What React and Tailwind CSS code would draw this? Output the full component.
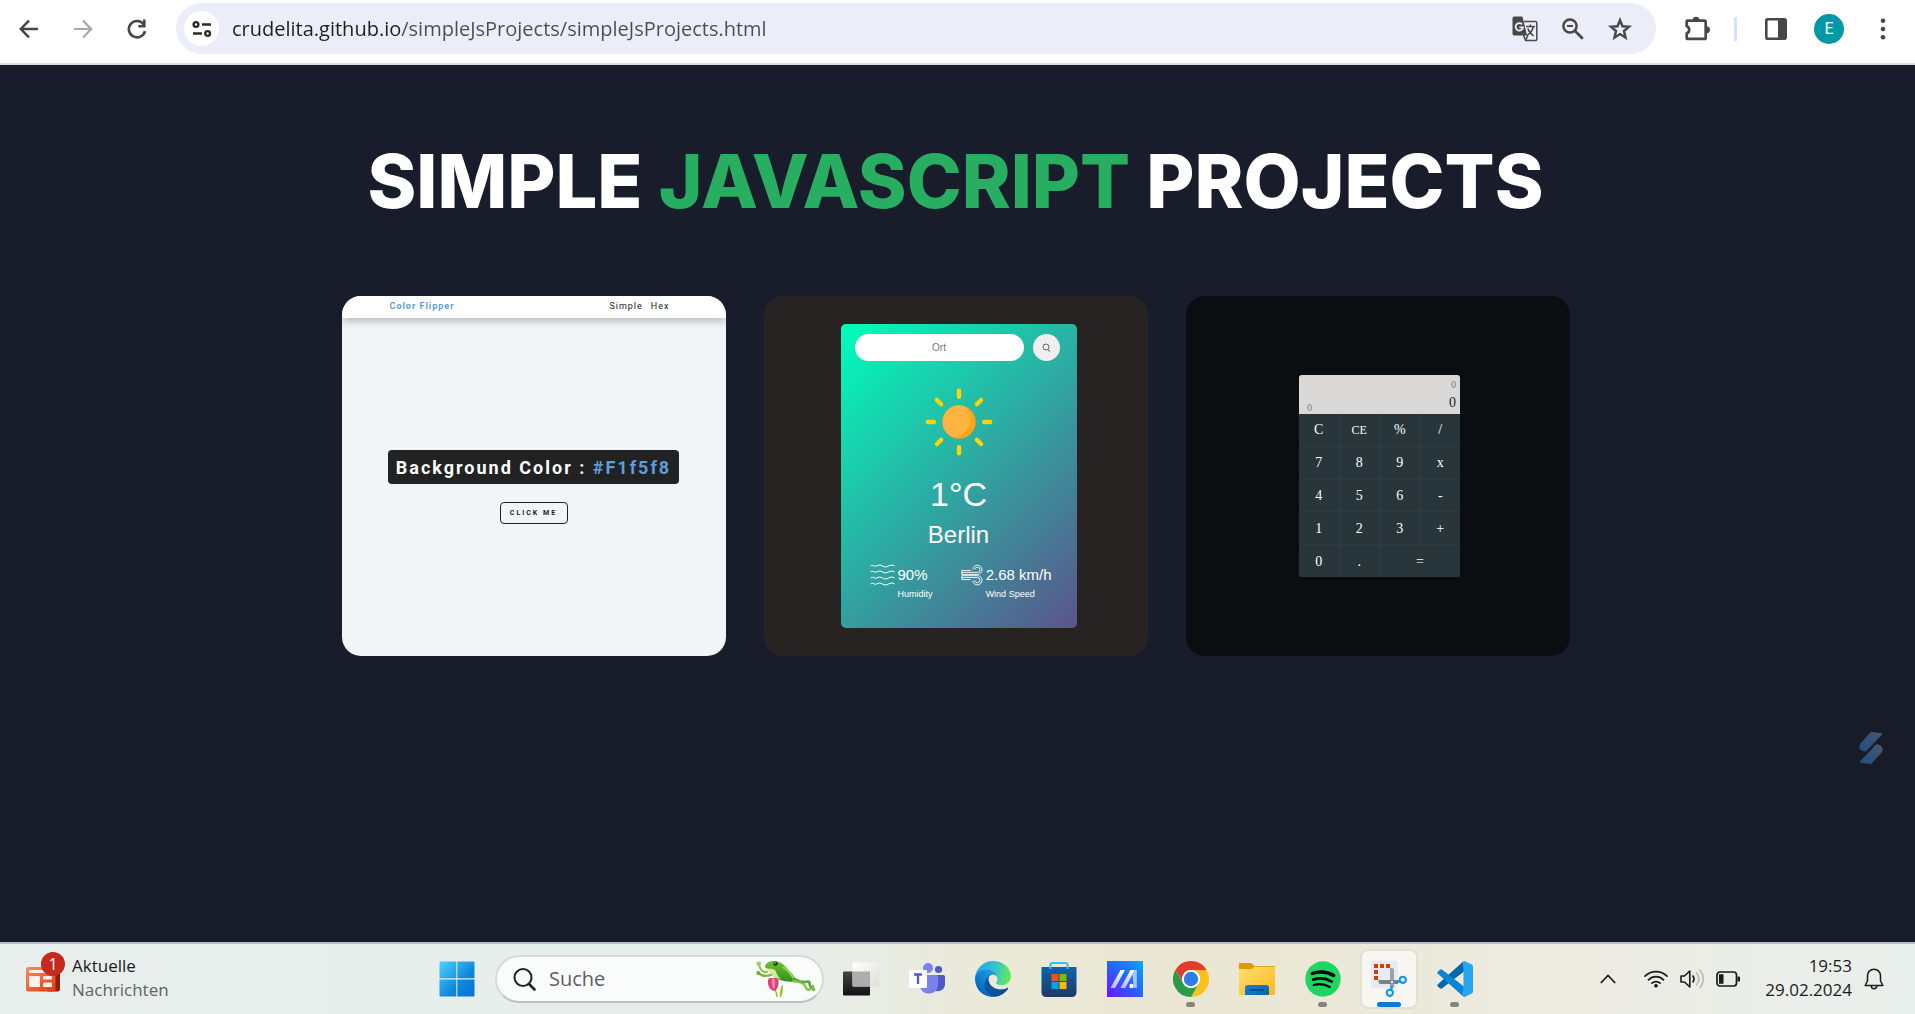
import React from "react";

const UI = "font-['Open_Sans','Noto_Sans',sans-serif]";

/* ---------- browser toolbar icons ---------- */

function ArrowLeft() {
  return (
    <svg viewBox="0 0 20 20" className="size-5" fill="none" stroke="currentColor" strokeWidth="2.5">
      <path d="M19 10H3M10 1.6L1.8 10l8.2 8.4" />
    </svg>
  );
}

function ArrowRight() {
  return (
    <svg viewBox="0 0 20 20" className="size-5" fill="none" stroke="currentColor" strokeWidth="2.2">
      <path d="M1 10h16M10 1.6L18.2 10 10 18.4" />
    </svg>
  );
}

function Reload() {
  return (
    <svg viewBox="0 0 20 20" className="size-5" fill="none" stroke="currentColor" strokeWidth="2.6">
      <path d="M18 12.2A8.2 8.2 0 1 1 16.6 5.2" />
      <path d="M18.6 .6V8.6H11.4V6h4.6V.6z" fill="currentColor" stroke="none" />
    </svg>
  );
}

function SiteSettings() {
  return (
    <svg viewBox="0 0 20 20" className="size-5" fill="none" stroke="currentColor" strokeWidth="2.4">
      <circle cx="4" cy="5.5" r="2.4" />
      <path d="M10 5.5h9M1 14.5h9" />
      <circle cx="15.6" cy="14.5" r="2.4" />
    </svg>
  );
}

function Translate() {
  return (
    <svg viewBox="0 0 26 26" className="size-[26px]">
      <path d="M12 5.6h11.4a1.4 1.4 0 0 1 1.4 1.4v16.2a1.4 1.4 0 0 1-1.4 1.4H13.6L11.5 19" fill="none" stroke="#474747" strokeWidth="1.5" />
      <path d="M2.2.5h8.2l4.7 18.9H2.2A1.7 1.7 0 0 1 .5 17.7V2.2A1.7 1.7 0 0 1 2.2.5z" fill="#474747" />
      <path d="M10 8.3a3.7 3.7 0 1 0 1 3H7.4" fill="none" stroke="#ebeef8" strokeWidth="1.8" />
      <path d="M14 10.5h9M18.3 8.5v2M21.3 10.5c-.8 4-3.3 7-6.3 9M15.8 12.5c1 3 3 5.500 6 7.500M13.600 24.500l2.200-5" fill="none" stroke="#474747" strokeWidth="1.5" />
    </svg>
  );
}

function ZoomOut() {
  return (
    <svg viewBox="0 0 22 22" className="size-[22px]" fill="none" stroke="currentColor">
      <circle cx="8" cy="8" r="6.6" strokeWidth="2.5" />
      <path d="M12.8 12.8l8 8" strokeWidth="2.7" />
      <path d="M5 8h6" strokeWidth="2" />
    </svg>
  );
}

function Star() {
  return (
    <svg viewBox="0 0 24 24" className="size-6" fill="none" stroke="currentColor" strokeWidth="2.4">
      <path d="M12 3.200l2.500 6.100 6.500.5-5 4.200 1.600 6.600L12 17.100l-5.600 3.500L8 14 3 9.800l6.500-.5z" />
    </svg>
  );
}

function Puzzle() {
  return (
    <svg viewBox="0 0 25 25" className="size-[25px]">
      <path d="M2.300 4.700H19.500a1.200 1.200 0 0 1 1.200 1.200V21.700a1.200 1.200 0 0 1-1.200 1.200H2.300a.6.6 0 0 1-.6-.6V17.400a4 4 0 0 0 0-7.400V5.300a.6.6 0 0 1 .6-.6z" fill="none" stroke="currentColor" strokeWidth="2.7" />
      <path d="M7.800 4a3.300 3.300 0 0 1 6.600 0zM21.500 10.300a3.500 3.500 0 0 1 0 7z" fill="currentColor" />
    </svg>
  );
}

function SidePanel() {
  return (
    <svg viewBox="0 0 22 22" className="size-[22px]">
      <rect x="1.3" y="1.3" width="19.4" height="19.4" rx="1.5" fill="none" stroke="currentColor" strokeWidth="2.6" />
      <path d="M13 1h7v20h-7z" fill="currentColor" />
    </svg>
  );
}

function Dots() {
  return (
    <svg viewBox="0 0 6 22" className="h-[22px] w-1.5" fill="currentColor">
      <circle cx="3" cy="2.7" r="2.3" />
      <circle cx="3" cy="11" r="2.3" />
      <circle cx="3" cy="19.3" r="2.3" />
    </svg>
  );
}

/* ---------- taskbar icons ---------- */

function NewsIcon() {
  return (
    <svg viewBox="0 0 34 26" className="h-[26px] w-[34px]">
      <defs>
        <linearGradient id="news" x1="0" y1="0" x2="1" y2="1">
          <stop offset="0" stopColor="#ff8a5c" />
          <stop offset="1" stopColor="#df3a14" />
        </linearGradient>
      </defs>
      <rect x="20" y="3" width="14" height="22.5" rx="2.5" fill="#8f1d0c" />
      <rect x="0" y="1" width="29.5" height="24.5" rx="2.5" fill="url(#news)" />
      <rect x="3" y="4" width="24" height="3" rx="1" fill="#fff1ea" />
      <rect x="3" y="10" width="11" height="11" rx="1" fill="#fff1ea" />
      <rect x="17" y="10" width="9" height="3.5" rx="1" fill="#fff1ea" />
      <rect x="17" y="16.5" width="9" height="4.5" rx="1" fill="#fff1ea" />
    </svg>
  );
}

function WindowsLogo() {
  return (
    <svg viewBox="0 0 36 36" className="size-9">
      <defs>
        <linearGradient id="win" gradientUnits="userSpaceOnUse" x1="0" y1="0" x2="36" y2="36">
          <stop offset="0" stopColor="#4fd4ff" />
          <stop offset=".6" stopColor="#0f86dc" />
          <stop offset="1" stopColor="#0074d4" />
        </linearGradient>
      </defs>
      <path d="M1.500.5H17.300V17.200H.5V1.500a1 1 0 0 1 1-1zM18.300.5H34.500a1 1 0 0 1 1 1V17.200H18.300zM.5 18.600H17.300V35.500H1.500a1 1 0 0 1-1-1zM18.300 18.600H35.500V34.500a1 1 0 0 1-1 1H18.300z" fill="url(#win)" />
    </svg>
  );
}

function Frog() {
  return (
    <svg viewBox="0 0 60 38" className="h-[38px] w-[60px]">
      <defs>
        <linearGradient id="frog" x1="0" y1="0" x2="0" y2="1">
          <stop offset="0" stopColor="#6cc62c" />
          <stop offset="1" stopColor="#2f8f22" />
        </linearGradient>
      </defs>
      <path d="M24 37c-.5-5 .5-9 2.500-13 .8 5 0 9-1.500 13z" fill="#8fbf20" />
      <path d="M19 30c1.500 2 2 4 2 7" fill="none" stroke="#a5b93a" strokeWidth="1.5" />
      <path d="M12 20c1-2.500 3-2 5.500-2s4 0 4.800 1.500c.8 5-.3 9.500-3.800 11.500-5-1-7-6-6.500-11z" fill="#e23f74" />
      <path d="M15.500 19.500c1-1 2.500-1 3.500 0 .3 4 0 7-.8 10-1.800-2-2.700-6-2.700-10z" fill="#f68aa9" />
      <path d="M11 12C7 12.500 4 9.500 3 5" fill="none" stroke="#8cc84a" strokeWidth="2.2" strokeLinecap="round" />
      <circle cx="2.7" cy="3.8" r="2.3" fill="#a9c77a" />
      <path d="M17 14C12 16.500 7 16.500 3 13.500" fill="none" stroke="#79b83a" strokeWidth="2.4" strokeLinecap="round" />
      <circle cx="2.3" cy="13" r="2" fill="#6da845" />
      <path d="M9 5.500C11.500 1.500 16 .3 21 1.500c5 1 8 4 11 8 4 4 6.500 7 8.500 11-3 2-11 1.500-17.500-1-5-2-8-5-9-9-3-1-5-2.500-5-5z" fill="url(#frog)" />
      <path d="M10 8c3 1 6 0 9 2 2 3 2 6 6 9-6-1-10-4-11-8-2 0-4-1-4-3z" fill="#dde5a4" />
      <path d="M27 7c5 3 8 7 11 12" fill="none" stroke="#98dc4c" strokeWidth="2" />
      <path d="M38 19c5 2.500 8 3.500 11 3 3-.8 4.500-1 4.500 1 0 2.500 1 4.500 4.500 6.500" fill="none" stroke="#53a830" strokeWidth="2.6" strokeLinecap="round" />
      <path d="M37 21c5 .5 10 1 11.500 4l2.500 4.500M51 29.500h3M57 26v4" fill="none" stroke="#7fc045" strokeWidth="2.3" strokeLinecap="round" />
      <circle cx="19.5" cy="3.6" r="2.2" fill="#20301a" />
      <circle cx="19" cy="3" r=".7" fill="#fff" />
    </svg>
  );
}

function TaskViewIcon() {
  return (
    <svg viewBox="0 0 36 36" className="size-9">
      <defs>
        <linearGradient id="tvd" x1="0" y1="0" x2="0" y2="1">
          <stop offset="0" stopColor="#444" />
          <stop offset="1" stopColor="#111" />
        </linearGradient>
        <linearGradient id="tvl" x1="0" y1="0" x2="1" y2="1">
          <stop offset="0" stopColor="#fff" />
          <stop offset="1" stopColor="#dedede" />
        </linearGradient>
      </defs>
      <rect x="0" y="10.5" width="27" height="24" rx="1" fill="url(#tvd)" />
      <rect x="9.5" y="1.5" width="26" height="24" rx="1" fill="url(#tvl)" />
      <path d="M9.500 10.500H27v15H9.500z" fill="#adadad" />
    </svg>
  );
}

function TeamsIcon() {
  return (
    <svg viewBox="0 0 36 36" className="size-9">
      <circle cx="29.5" cy="8.5" r="3.6" fill="#5059c9" />
      <path d="M22 14H34.500A1.500 1.500 0 0 1 36 15.500V23a7 7 0 0 1-12 5z" fill="#5059c9" />
      <circle cx="19" cy="7" r="5" fill="#7b83eb" />
      <path d="M11 14H27.500A1.500 1.500 0 0 1 29 15.500V25.500a9.500 9.500 0 0 1-18 1z" fill="#7b83eb" />
      <rect x="0" y="9" width="18" height="18" rx="1" fill="#fff" />
      <path d="M5 13.500h8M9 13.500v9.500" stroke="#5059c9" strokeWidth="2.3" />
    </svg>
  );
}

function EdgeIcon() {
  return (
    <svg viewBox="0 0 256 256" className="size-9">
      <defs>
        <linearGradient id="e1" gradientUnits="userSpaceOnUse" x1="60" y1="177" x2="240" y2="177">
          <stop offset="0" stopColor="#0c59a4" />
          <stop offset="1" stopColor="#114a8b" />
        </linearGradient>
        <linearGradient id="e2" gradientUnits="userSpaceOnUse" x1="155" y1="100" x2="46" y2="220">
          <stop offset="0" stopColor="#1b9de2" />
          <stop offset=".6" stopColor="#0f7fd3" />
          <stop offset="1" stopColor="#0067b8" />
        </linearGradient>
        <linearGradient id="e3" gradientUnits="userSpaceOnUse" x1="20" y1="60" x2="250" y2="110">
          <stop offset="0" stopColor="#2aa9e8" />
          <stop offset=".5" stopColor="#35c1d4" />
          <stop offset="1" stopColor="#66eb4c" />
        </linearGradient>
      </defs>
      <path fill="url(#e1)" d="M231 190.500c-3.400 1.800-6.900 3.400-10.500 4.700a101.700 101.700 0 0 1-35.900 6.500c-47.300 0-88.500-32.500-88.500-74.300a31.500 31.500 0 0 1 16.400-27.300c-42.800 1.800-53.800 46.400-53.800 72.500 0 73.900 68.100 81.400 82.800 81.400 7.900 0 19.800-2.300 27-4.600l1.300-.4a128.300 128.300 0 0 0 66.600-52.800 4 4 0 0 0-5.400-5.700z" />
      <path fill="url(#e2)" d="M105.700 241.400a79.200 79.200 0 0 1-22.700-21.300 80.700 80.700 0 0 1 29.500-120c3.200-1.500 8.500-4.100 15.600-4a32.400 32.400 0 0 1 25.700 13 31.900 31.900 0 0 1 6.300 18.700c0-.2 24.500-79.600-80-79.600-43.900 0-80 41.600-80 78.200a130.200 130.200 0 0 0 12.100 56 128 128 0 0 0 156.400 67 75.500 75.500 0 0 1-62.800-8z" />
      <path fill="url(#e3)" d="M152.300 148.900c-.9 1-3.400 2.500-3.400 5.600 0 2.600 1.700 5.200 4.800 7.300 14.300 10 41.400 8.600 41.500 8.600a59.600 59.600 0 0 0 30.300-8.300 61.400 61.400 0 0 0 30.400-52.900c.3-22.400-8-37.300-11.300-43.900C223.500 23.900 177.700 0 128 0A128 128 0 0 0 0 126.200c.5-36.500 36.800-66 80-66 3.500 0 23.500.3 42 10.100 16.300 8.600 24.900 19 30.800 29.200 6.200 10.700 7.300 24.100 7.300 29.500s-2.700 13.300-7.800 19.900z" />
    </svg>
  );
}

function StoreIcon() {
  return (
    <svg viewBox="0 0 36 36" className="size-9">
      <defs>
        <linearGradient id="store" x1="0" y1="0" x2="0" y2="1">
          <stop offset="0" stopColor="#0f63ae" />
          <stop offset="1" stopColor="#1d3a63" />
        </linearGradient>
      </defs>
      <path d="M.5 6H35.500V31.500a4.500 4.500 0 0 1-4.500 4.500H5a4.500 4.500 0 0 1-4.500-4.500z" fill="url(#store)" />
      <path d="M9.500 8V3.500a1.500 1.500 0 0 1 1.500-1.500H25a1.500 1.500 0 0 1 1.500 1.500V8" fill="none" stroke="#2fc3f5" strokeWidth="2" />
      <path d="M10.500 13h7v7h-7z" fill="#f25022" />
      <path d="M18.500 13h7v7h-7z" fill="#7fba00" />
      <path d="M10.500 21h7v7h-7z" fill="#00a4ef" />
      <path d="M18.500 21h7v7h-7z" fill="#ffb900" />
    </svg>
  );
}

function MyAsusIcon() {
  return (
    <svg viewBox="0 0 36 36" className="size-9">
      <defs>
        <linearGradient id="asus" x1="0" y1="1" x2="1" y2="0">
          <stop offset="0" stopColor="#6d12ff" />
          <stop offset=".5" stopColor="#2763ff" />
          <stop offset="1" stopColor="#05a8ff" />
        </linearGradient>
        <linearGradient id="asusm" x1="0" y1="0" x2="0" y2="1">
          <stop offset="0" stopColor="#ffffff" />
          <stop offset="1" stopColor="#b9b4ff" />
        </linearGradient>
      </defs>
      <path d="M0 0h36v36H0z" fill="url(#asus)" />
      <path d="M3.500 27L13.500 9h4.500L8.200 27zM13.500 27L23.500 9h4.500L18.200 27z" fill="url(#asusm)" />
      <path d="M25.500 13.500L28 9h1.800V27h-3z" fill="#a9c4ff" />
      <circle cx="24.5" cy="25" r="2.2" fill="#fff" />
    </svg>
  );
}

function ChromeIcon() {
  const wedge = "M2.400 9A18 18 0 0 1 33.600 9H18A9 9 0 0 0 10.200 22.500z";
  return (
    <svg viewBox="0 0 36 36" className="size-9">
      <path d={wedge} fill="#e33b2e" />
      <path d={wedge} fill="#fbc116" transform="rotate(120 18 18)" />
      <path d={wedge} fill="#2a9c49" transform="rotate(240 18 18)" />
      <circle cx="18" cy="18" r="9" fill="#fff" />
      <circle cx="18" cy="18" r="7.2" fill="#2f7bea" />
    </svg>
  );
}

function FolderIcon() {
  return (
    <svg viewBox="0 0 36 36" className="size-9">
      <defs>
        <linearGradient id="fold" x1="0" y1="0" x2="1" y2="1">
          <stop offset="0" stopColor="#ffde70" />
          <stop offset="1" stopColor="#fbb91c" />
        </linearGradient>
        <linearGradient id="foldb" x1="0" y1="0" x2="1" y2="1">
          <stop offset="0" stopColor="#0f83d6" />
          <stop offset="1" stopColor="#1160ad" />
        </linearGradient>
      </defs>
      <path d="M0 3a1 1 0 0 1 1-1H11.500a2 2 0 0 1 1.500.7L15.300 5H35a1 1 0 0 1 1 1v6H0z" fill="#dd9a05" />
      <path d="M0 8H12.500l3-2.200H36V33a1 1 0 0 1-1 1H1a1 1 0 0 1-1-1z" fill="url(#fold)" />
      <path d="M6 34V27a3 3 0 0 1 3-3H27a3 3 0 0 1 3 3v7z" fill="url(#foldb)" />
      <path d="M10.500 29H25" stroke="#0b4f91" strokeWidth="2" />
    </svg>
  );
}

function SpotifyIcon() {
  return (
    <svg viewBox="0 0 36 36" className="size-9">
      <circle cx="18" cy="18" r="17.7" fill="#1ed760" />
      <g fill="none" stroke="#000" strokeLinecap="round">
        <path d="M7.200 12.500c7-2.200 15.500-1.500 21.500 1.900" strokeWidth="3.4" />
        <path d="M8.200 18.600c6-1.800 13.500-1 18.500 2" strokeWidth="2.8" />
        <path d="M8.900 24c5.500-1.400 11-.9 15.800 1.900" strokeWidth="2.3" />
      </g>
    </svg>
  );
}

function SnipIcon() {
  return (
    <svg viewBox="0 0 36 36" className="size-9">
      <rect x="0" y="0" width="27" height="27" rx="2" fill="#e6eaf1" />
      <path d="M3 3h4v4H3zM9 3h4v4H9zM15 3h4v4h-4zM3 9h4v4H3zM3 15h4v4H3z" fill="#d83b01" />
      <path d="M19 7h2a2 2 0 0 1 2 2v17h-4z" fill="#9aa1ab" />
      <path d="M7.500 19H27v4H9a2 2 0 0 1-1.500-2z" fill="#7a828e" />
      <circle cx="21" cy="21" r="1.3" fill="#dfe3e8" />
      <circle cx="31.8" cy="18.8" r="3.1" fill="none" stroke="#1296e0" strokeWidth="2.1" />
      <circle cx="18.8" cy="31.8" r="3.1" fill="none" stroke="#1296e0" strokeWidth="2.1" />
      <path d="M25.500 21l3.500-.8M21 25l-.8 3.500" stroke="#1296e0" strokeWidth="2.5" />
    </svg>
  );
}

function VsCodeIcon() {
  return (
    <svg viewBox="0 0 36 36" className="size-9">
      <path d="M26.500.2L.9 23.300a1.500 1.500 0 0 0 0 2.200l2 1.800a1.600 1.600 0 0 0 2 .1L27 10.500z" fill="#0069b0" />
      <path d="M26.500 35.800L.9 12.700a1.500 1.500 0 0 1 0-2.200l2-1.800a1.600 1.600 0 0 1 2-.1L27 25.500z" fill="#0a85d3" />
      <path d="M26.500.2a2 2 0 0 1 1.600 0l6.700 3.200A2 2 0 0 1 36 5.200V30.800a2 2 0 0 1-1.200 1.800l-6.700 3.200a2 2 0 0 1-1.600 0z" fill="#27a5f1" />
    </svg>
  );
}

function Wifi() {
  return (
    <svg viewBox="0 0 24 18" className="h-[18px] w-6" fill="none" stroke="currentColor" strokeWidth="1.7" strokeLinecap="round">
      <path d="M1 6.200a15.600 15.600 0 0 1 22 0M4.500 9.800a10.600 10.600 0 0 1 15 0M8 13.200a5.700 5.700 0 0 1 8 0" />
      <circle cx="12" cy="15.8" r="1.4" fill="currentColor" strokeWidth="1" />
    </svg>
  );
}

function Speaker() {
  return (
    <svg viewBox="0 0 24 20" className="h-5 w-6" fill="none" strokeWidth="1.6" strokeLinecap="round" strokeLinejoin="round">
      <path d="M1 7h3.500L9.800 2v16L4.500 13H1z" stroke="currentColor" />
      <path d="M13 7c1.300 1.900 1.300 4.100 0 6" stroke="currentColor" />
      <path d="M16.500 4c3 3.700 3 8.300 0 12M20 1.200c4.300 5.500 4.300 12.100 0 17.600" stroke="#b9bcb8" />
    </svg>
  );
}

function Battery() {
  return (
    <svg viewBox="0 0 24 16" className="h-4 w-6">
      <rect x="1" y="1" width="19.5" height="14" rx="3" fill="none" stroke="currentColor" strokeWidth="1.7" />
      <path d="M3 3.200h4.500v9.600H3zM21.500 5.500h1.500a1 1 0 0 1 1 1v3a1 1 0 0 1-1 1h-1.500z" fill="currentColor" />
    </svg>
  );
}

function Bell() {
  return (
    <svg viewBox="0 0 20 22" className="h-[22px] w-5" fill="none" stroke="currentColor" strokeWidth="1.5" strokeLinejoin="round">
      <path d="M10 1.200a6.500 6.500 0 0 0-6.500 6.500v5L1.200 17.500h17.600L16.500 12.700v-5A6.500 6.500 0 0 0 10 1.200z" />
      <path d="M7.300 18a2.700 2.700 0 0 0 5.400 0" />
    </svg>
  );
}

/* ---------- browser toolbar ---------- */

function BrowserBar() {
  return (
    <header className={`flex h-[65px] items-start border-b-2 border-[#dedede] bg-white pt-[3px] text-[#474747] ${UI}`}>
      <nav className="flex h-[51px] shrink-0 items-center gap-[34px] pl-[19px]" aria-label="History">
        <button aria-label="Back"><ArrowLeft /></button>
        <button aria-label="Forward" className="text-[#a9a9a9]"><ArrowRight /></button>
        <button aria-label="Reload"><Reload /></button>
      </nav>
      <div className="ml-[29px] flex h-[51px] min-w-0 flex-1 items-center rounded-full bg-[#ebeef8] pr-6 pl-2">
        <button aria-label="Site information" className="flex size-[35px] shrink-0 items-center justify-center rounded-full bg-white text-[#2a2a2a]">
          <SiteSettings />
        </button>
        <input
          aria-label="Address"
          defaultValue="crudelita.github.io/simpleJsProjects/simpleJsProjects.html"
          className="ml-[13px] h-10 min-w-0 flex-1 bg-[linear-gradient(90deg,#1f1f1f_169px,#4c4d52_169px)] bg-clip-text text-xl text-transparent outline-none"
        />
        <div className="flex shrink-0 items-center gap-6">
          <button aria-label="Translate"><Translate /></button>
          <button aria-label="Zoom"><ZoomOut /></button>
          <button aria-label="Bookmark"><Star /></button>
        </div>
      </div>
      <div className="flex h-[51px] shrink-0 items-center pr-[29px] pl-[29px]">
        <button aria-label="Extensions"><Puzzle /></button>
        <span className="mx-6 h-6 w-[3px] bg-[#d3e3fd]" />
        <button aria-label="Side panel" className="ml-1"><SidePanel /></button>
        <button aria-label="Profile" className="mr-7 ml-[27px] flex size-[30px] items-center justify-center rounded-full bg-[#0097a7] font-['Roboto',sans-serif] text-base text-white">
          E
        </button>
        <button aria-label="Menu" className="ml-2"><Dots /></button>
      </div>
    </header>
  );
}

/* ---------- project cards ---------- */

function ColorFlipper() {
  return (
    <article className="flex h-[360px] w-96 flex-col overflow-hidden rounded-[19px] bg-[#f1f5f8] font-['Roboto',sans-serif]">
      <div className="flex h-[22px] items-center justify-between bg-white pr-[56px] pl-12 text-[9px] shadow-[0_3px_8px_rgba(0,0,0,0.25)]">
        <span className="font-bold tracking-[1px] text-[#5f9ddb]">Color Flipper</span>
        <span className="flex gap-2 tracking-[1px] text-[#222]">
          <a href="#simple">Simple</a>
          <a href="#hex">Hex</a>
        </span>
      </div>
      <div className="flex flex-1 flex-col items-center justify-center gap-[18px]">
        <h2 className="flex h-[34px] items-center rounded bg-[#222] px-2 text-[18px] font-bold tracking-[2px] whitespace-pre text-white">
          Background Color : <span className="text-[#5f9ddb]">#F1f5f8</span>
        </h2>
        <button className="flex h-[22px] w-[68px] items-center justify-center rounded border border-[#222] text-[7px] font-bold tracking-[2px] text-[#222]">
          CLICK ME
        </button>
      </div>
    </article>
  );
}

function Sun() {
  const rays = [0, 45, 90, 135, 180, 225, 270, 315];
  return (
    <svg viewBox="0 0 68 68" className="size-[68px]">
      {rays.map((a) => (
        <rect key={a} x="31.8" y=".6" width="4.4" height="10.4" rx="2.2" fill="#fcd40a" transform={`rotate(${a} 34 34)`} />
      ))}
      <circle cx="34" cy="34" r="16.7" fill="#ffa412" />
      <path d="M34 17.300c6 0 11.500 4.700 11.500 14a17.500 17.500 0 0 1-17 18.300A16.700 16.700 0 0 1 34 17.300z" fill="#ffb340" />
    </svg>
  );
}

function Waves() {
  const wave = "c2-2 4 1 6 0s4-1.500 6 0 4 1 6 0 4-1.500 6 0";
  return (
    <svg viewBox="0 0 25 22" className="h-[22px] w-[25px]" fill="none" stroke="#fff" strokeWidth="1">
      <path d={`M.5 2${wave}M.5 8${wave}M.5 14${wave}M.5 20${wave}`} />
    </svg>
  );
}

function Wind() {
  return (
    <svg viewBox="0 0 22 22" className="size-[22px]" fill="none" stroke="#fff" strokeWidth=".9">
      <path d="M11.800 5.500a4.600 4.600 0 1 1 4.700 4.900H.8V6.500h9M13.800 5.500a2.600 2.600 0 1 1 2.700 2.900H.8" />
      <path d="M.8 11.700h15.700a4.600 4.600 0 1 1-4.700 4.800M13.800 16.500a2.600 2.600 0 1 0 2.700-2.900H.8M.8 11.700v3.900h9" />
    </svg>
  );
}

function Weather() {
  return (
    <article className="flex h-[360px] w-96 items-center justify-center rounded-[19px] bg-[#272322] pl-1.5 font-['Liberation_Sans',Arial,sans-serif] text-white">
      <div className="flex h-[304px] w-[236px] flex-col items-center rounded-[5px] bg-[linear-gradient(135deg,#00feba,#5b548a)] pt-2.5">
        <form className="flex w-full justify-between pr-[17px] pl-3.5" onSubmit={(e) => e.preventDefault()}>
          <input
            aria-label="Ort"
            placeholder="Ort"
            className="h-[27px] w-[169px] rounded-full bg-white text-center text-[10px] text-[#555] outline-none placeholder:text-[#777]"
          />
          <button aria-label="Suchen" className="flex size-[27px] items-center justify-center rounded-full bg-[#efefef]">
            <svg viewBox="0 0 9 10" className="h-2.5 w-[9px]" fill="none" stroke="#555">
              <circle cx="4" cy="4" r="3" strokeWidth=".9" />
              <path d="M5.500 6.500l2.500 2" strokeWidth="1" />
            </svg>
          </button>
        </form>
        <div className="mt-[27px]"><Sun /></div>
        <p className="mt-[18px] text-[34px] leading-10">1°C</p>
        <p className="mt-[7px] text-2xl leading-7">Berlin</p>
        <dl className="mt-[15px] flex w-full justify-between pr-[25px] pl-[29px]">
          <div className="flex gap-[3px]">
            <Waves />
            <div className="flex flex-col">
              <dd className="text-[15px] leading-[22px]">90%</dd>
              <dt className="text-[9px] leading-4">Humidity</dt>
            </div>
          </div>
          <div className="flex gap-[3px]">
            <Wind />
            <div className="flex flex-col">
              <dd className="text-[15px] leading-[22px]">2.68 km/h</dd>
              <dt className="text-[9px] leading-4">Wind Speed</dt>
            </div>
          </div>
        </dl>
      </div>
    </article>
  );
}

const KEYS = ["C", "CE", "%", "/", "7", "8", "9", "x", "4", "5", "6", "-", "1", "2", "3", "+", "0", ".", "="];

function Calculator() {
  return (
    <article className="flex h-[360px] w-96 items-center justify-center rounded-[19px] bg-[#0b0e10] pl-1 font-['Liberation_Serif',serif]">
      <div className="w-[161px] overflow-hidden rounded-[3px] bg-[#28353a]">
        <div className="flex h-[39px] items-end justify-between bg-[#dbd9d8] pr-1 pl-2 text-[10px] leading-3 text-[#777]">
          <span>0</span>
          <span className="flex flex-col items-end self-center">
            <span>0</span>
            <span className="mt-1 text-[14px] leading-4 text-[#222]">0</span>
          </span>
        </div>
        <div className="grid h-[163px] grid-cols-4 gap-px bg-[#2f3b40]">
          {KEYS.map((k) => (
            <button
              key={k}
              className={`flex items-center justify-center bg-[#28353a] text-white ${k === "=" ? "col-span-2" : ""} ${k === "CE" ? "text-[12px]" : "text-[14px]"}`}
            >
              {k}
            </button>
          ))}
        </div>
      </div>
    </article>
  );
}

/* ---------- taskbar ---------- */

const APPS = [
  { name: "Task View", icon: <TaskViewIcon /> },
  { name: "Teams", icon: <TeamsIcon /> },
  { name: "Edge", icon: <EdgeIcon /> },
  { name: "Store", icon: <StoreIcon /> },
  { name: "MyASUS", icon: <MyAsusIcon /> },
  { name: "Chrome", icon: <ChromeIcon />, running: true },
  { name: "Explorer", icon: <FolderIcon /> },
  { name: "Spotify", icon: <SpotifyIcon />, running: true },
  { name: "Snipping Tool", icon: <SnipIcon />, active: true },
  { name: "Visual Studio Code", icon: <VsCodeIcon />, running: true },
];

function Taskbar() {
  return (
    <footer className={`grid h-[72px] grid-cols-[1fr_auto_1fr] items-center border-t-2 border-[#b9bfbc] bg-[linear-gradient(90deg,#e7eeec_0%,#e6eeec_40%,#ebe9d8_52%,#eae6d3_62%,#ecebe0_80%,#e9efed_100%)] text-[#1b1b1b] ${UI}`}>
      <button className="flex items-center justify-self-start pl-[26px] text-left">
        <span className="relative">
          <NewsIcon />
          <span className="absolute -top-[14px] left-[15px] flex size-6 items-center justify-center rounded-full bg-[#c42b1c] text-base text-white">1</span>
        </span>
        <span className="ml-3 flex flex-col pb-0.5 text-[17px] leading-6">
          <span>Aktuelle</span>
          <span className="text-[#5f6462]">Nachrichten</span>
        </span>
      </button>

      <div className="flex items-center pl-2">
        <button aria-label="Start"><WindowsLogo /></button>
        <label className="ml-5 flex h-12 w-[329px] items-center rounded-full border-2 border-[#d5dbda] border-b-[#bdc2c1] bg-[#fafcfb] pr-1.5 pl-4">
          <svg viewBox="0 0 24 24" className="size-6 shrink-0" fill="none" stroke="#222" strokeLinecap="round">
            <circle cx="10" cy="10.5" r="8.5" strokeWidth="2" />
            <path d="M16 17l5.500 5.500" strokeWidth="2.6" />
          </svg>
          <input aria-label="Suche" placeholder="Suche" className="ml-3 min-w-0 flex-1 bg-transparent text-xl outline-none placeholder:text-[#5c5f5f]" />
          <Frog />
        </label>
        <div className="ml-2 flex items-center gap-2">
          {APPS.map((a) => (
            <button
              key={a.name}
              aria-label={a.name}
              className={`relative flex h-[60px] w-[58px] items-center justify-center rounded-lg ${a.active ? "border-2 border-[#e3e0d3] bg-[#f7f6f0]" : ""}`}
            >
              {a.icon}
              {a.running && <span className="absolute bottom-0.5 left-6 h-[5px] w-[9px] rounded-full bg-[#84837c]" />}
              {a.active && <span className="absolute bottom-0 left-[15px] h-[5px] w-6 rounded-full bg-[#0a78d4]" />}
            </button>
          ))}
        </div>
      </div>

      <div className="flex items-center justify-self-end pr-[31px]">
        <button aria-label="Show hidden icons" className="mr-7">
          <svg viewBox="0 0 16 10" className="h-2.5 w-4" fill="none" stroke="currentColor" strokeWidth="1.8">
            <path d="M.8 9L8 1.500 15.200 9" />
          </svg>
        </button>
        <button aria-label="Network, sound and battery" className="flex items-center gap-3">
          <Wifi />
          <Speaker />
          <Battery />
        </button>
        <time className="ml-[25px] flex flex-col pb-0.5 text-right text-[17px] leading-6">
          <span>19:53</span>
          <span>29.02.2024</span>
        </time>
        <button aria-label="Notifications" className="ml-3"><Bell /></button>
      </div>
    </footer>
  );
}

export default function App() {
  return (
    <div className="flex min-h-screen flex-col bg-[#191c2a]">
      <BrowserBar />
      <main className="relative flex-1 pt-[60px] pr-7 pl-6">
        <h1 className="text-center font-['Inter',sans-serif] text-[74px] leading-[112px] font-extrabold text-white">
          SIMPLE <span className="text-[#27ae60]">JAVASCRIPT</span> PROJECTS
        </h1>
        <div className="mt-[59px] flex flex-wrap justify-center gap-[38px] pb-10">
          <ColorFlipper />
          <Weather />
          <Calculator />
        </div>
        <button aria-label="Assistant" className="absolute right-4 bottom-[166px] flex size-14 items-center justify-center rounded-lg bg-[#181b28]">
          <svg viewBox="0 0 26 34" className="h-[34px] w-[26px]">
            <defs>
              <linearGradient id="swg" x1="0" y1="1" x2="1" y2="0">
                <stop offset="0" stopColor="#1f4e87" />
                <stop offset="1" stopColor="#4a5767" />
              </linearGradient>
            </defs>
            <path d="M13 .8L25 2.500 8 20.500C3 21 0 17 2 13z" fill="url(#swg)" />
            <path d="M13 33.200L1 31.500 18 13.500c5-.5 8 3.500 6 7.500z" fill="url(#swg)" />
          </svg>
        </button>
      </main>
      <Taskbar />
    </div>
  );
}
